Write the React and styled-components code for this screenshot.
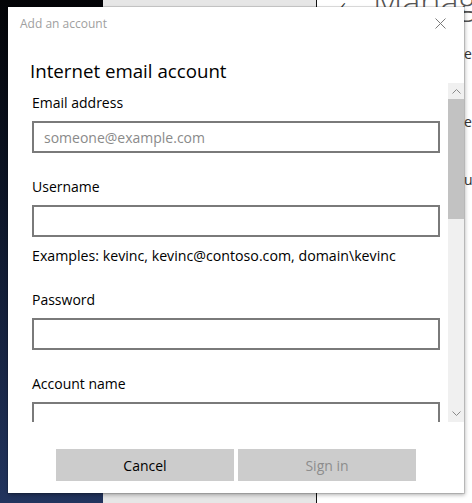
import React from "react";
import styled, { createGlobalStyle } from "styled-components";

const Global = createGlobalStyle`
  html, body { margin: 0; padding: 0; }
  body {
    width: 472px;
    height: 503px;
    overflow: hidden;
    font-family: "Open Sans", "Noto Sans", sans-serif;
  }
`;

function Chevron({ down }) {
  return (
    <svg width="9" height="6" viewBox="0 0 9 6">
      <path
        d={down ? "M0.5 0.5 L4.5 4.5 L8.5 0.5" : "M0.5 5.5 L4.5 1.5 L8.5 5.5"}
        fill="none"
        stroke="#8a8a8a"
        strokeWidth="1"
      />
    </svg>
  );
}

function CloseIcon() {
  return (
    <svg width="11" height="11" viewBox="0 0 11 11">
      <path d="M0.5 0.5 L10.5 10.5 M10.5 0.5 L0.5 10.5" stroke="#7a7a7a" strokeWidth="1" />
    </svg>
  );
}

const fields = [
  { label: "Email address", placeholder: "someone@example.com" },
  { label: "Username", hint: "Examples: kevinc, kevinc@contoso.com, domain\\kevinc" },
  { label: "Password", type: "password" },
  { label: "Account name" },
];

export default function App() {
  return (
    <>
      <Global />
      <Screen>
        <Desktop />
        <NavPane />
        <MainPane>
          <Back>‹</Back>
          <PageTitle>Manage</PageTitle>
          <Peek $top={44}>ec</Peek>
          <Peek $top={112}>e</Peek>
          <Peek $top={170}>u</Peek>
        </MainPane>

        <Dialog>
          <TitleBar>
            <DialogTitle>Add an account</DialogTitle>
            <CloseButton><CloseIcon /></CloseButton>
          </TitleBar>
          <Heading>Internet email account</Heading>
          <ScrollArea>
            <Form>
              {fields.map((f) => (
                <Field key={f.label}>
                  <Label>{f.label}</Label>
                  <Input type={f.type || "text"} placeholder={f.placeholder} />
                  {f.hint && <Hint>{f.hint}</Hint>}
                </Field>
              ))}
            </Form>
            <Scrollbar>
              <ArrowBox><Chevron /></ArrowBox>
              <Track>
                <Thumb />
              </Track>
              <ArrowBox><Chevron down /></ArrowBox>
            </Scrollbar>
          </ScrollArea>
          <Buttons>
            <Button>Cancel</Button>
            <Button $disabled>Sign in</Button>
          </Buttons>
        </Dialog>
      </Screen>
    </>
  );
}

const Screen = styled.div`
  position: relative;
  width: 472px;
  height: 503px;
  display: flex;
  overflow: hidden;
`;

const Desktop = styled.div`
  width: 103px;
  flex-shrink: 0;
  background: linear-gradient(180deg, #030407 0%, #0d1527 40%, #22345e 100%);
`;

const NavPane = styled.div`
  width: 213px;
  flex-shrink: 0;
  background: #e6e6e6;
  border-right: 1px solid #111;
`;

const MainPane = styled.div`
  position: relative;
  flex: 1;
  background: #fff;
`;

const Back = styled.span`
  position: absolute;
  left: 22px;
  top: -14px;
  font-size: 28px;
  color: #333;
  font-weight: 300;
`;

const PageTitle = styled.span`
  position: absolute;
  left: 56px;
  top: -22px;
  font-size: 34px;
  font-weight: 300;
  color: #555;
`;

const Peek = styled.span`
  position: absolute;
  left: 147px;
  top: ${(p) => p.$top}px;
  font-size: 14px;
  color: #333;
`;

const Dialog = styled.div`
  position: absolute;
  left: 8px;
  top: 7px;
  width: 456px;
  height: 486px;
  background: #fff;
  box-shadow: 0 0 0 1px rgba(0, 0, 0, 0.12), 1px 2px 4px rgba(0, 0, 0, 0.3);
  display: flex;
  flex-direction: column;
`;

const TitleBar = styled.div`
  height: 32px;
  display: flex;
  align-items: center;
  justify-content: space-between;
  padding: 0 18px 0 12px;
`;

const DialogTitle = styled.span`
  font-size: 12px;
  color: #a0a0a0;
`;

const CloseButton = styled.span`
  display: flex;
  align-items: center;
`;

const Heading = styled.h1`
  margin: 0;
  padding: 20px 0 0 22px;
  height: 44px;
  box-sizing: border-box;
  font-size: 18.7px;
  font-weight: 400;
  color: #000;
  line-height: 24px;
`;

const ScrollArea = styled.div`
  height: 339px;
  display: flex;
  overflow: hidden;
`;

const Form = styled.div`
  flex: 1;
  padding: 10px 8px 0 24px;
  display: flex;
  flex-direction: column;
  gap: 24px;
`;

const Field = styled.div`
  display: flex;
  flex-direction: column;
`;

const Label = styled.label`
  font-size: 14px;
  color: #000;
  line-height: 20px;
  margin-bottom: 8px;
`;

const Input = styled.input`
  box-sizing: border-box;
  width: 408px;
  height: 32px;
  border: 2px solid #7a7a7a;
  padding: 0 10px;
  font-family: inherit;
  font-size: 14px;
  outline: none;
  &::placeholder {
    color: #8a8a8a;
  }
`;

const Hint = styled.span`
  font-size: 14.2px;
  line-height: 20px;
  margin-top: 9px;
  color: #000;
  white-space: nowrap;
`;

const Scrollbar = styled.div`
  width: 16px;
  display: flex;
  flex-direction: column;
  background: #f0f0f0;
`;

const ArrowBox = styled.div`
  height: 16px;
  display: flex;
  align-items: center;
  justify-content: center;
`;

const Track = styled.div`
  flex: 1;
`;

const Thumb = styled.div`
  height: 120px;
  background: #c2c2c2;
`;

const Buttons = styled.div`
  display: flex;
  gap: 4px;
  padding: 27px 48px 0;
`;

const Button = styled.button`
  width: 178px;
  height: 32px;
  border: none;
  background: #cccccc;
  font-family: inherit;
  font-size: 14px;
  color: ${(p) => (p.$disabled ? "#8c8c8c" : "#000")};
`;
